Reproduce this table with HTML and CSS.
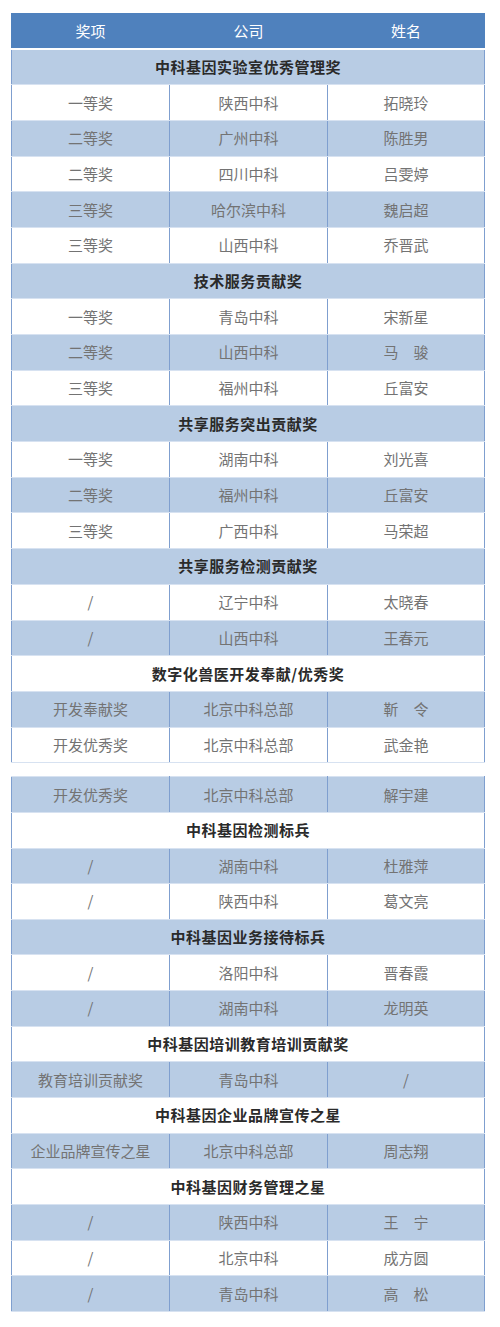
FILE: index.html
```html
<!DOCTYPE html>
<html lang="zh">
<head>
<meta charset="utf-8">
<link rel="stylesheet" href="styles.css">
</head>
<body>
<div class="page">
<table class="awards">
<colgroup><col class="c1"><col class="c2"><col class="c3"></colgroup>
<thead><tr class="head"><th>奖项</th><th>公司</th><th>姓名</th></tr></thead>
<tbody>
<tr class="sec blue"><td colspan="3">中科基因实验室优秀管理奖</td></tr>
<tr class="white"><td>一等奖</td><td>陕西中科</td><td>拓晓玲</td></tr>
<tr class="blue"><td>二等奖</td><td>广州中科</td><td>陈胜男</td></tr>
<tr class="white"><td>二等奖</td><td>四川中科</td><td>吕雯婷</td></tr>
<tr class="blue"><td>三等奖</td><td>哈尔滨中科</td><td>魏启超</td></tr>
<tr class="white"><td>三等奖</td><td>山西中科</td><td>乔晋武</td></tr>
<tr class="sec blue"><td colspan="3">技术服务贡献奖</td></tr>
<tr class="white"><td>一等奖</td><td>青岛中科</td><td>宋新星</td></tr>
<tr class="blue"><td>二等奖</td><td>山西中科</td><td>马&emsp;骏</td></tr>
<tr class="white"><td>三等奖</td><td>福州中科</td><td>丘富安</td></tr>
<tr class="sec blue"><td colspan="3">共享服务突出贡献奖</td></tr>
<tr class="white"><td>一等奖</td><td>湖南中科</td><td>刘光喜</td></tr>
<tr class="blue"><td>二等奖</td><td>福州中科</td><td>丘富安</td></tr>
<tr class="white"><td>三等奖</td><td>广西中科</td><td>马荣超</td></tr>
<tr class="sec blue"><td colspan="3">共享服务检测贡献奖</td></tr>
<tr class="white"><td>/</td><td>辽宁中科</td><td>太晓春</td></tr>
<tr class="blue"><td>/</td><td>山西中科</td><td>王春元</td></tr>
<tr class="sec white"><td colspan="3">数字化兽医开发奉献/优秀奖</td></tr>
<tr class="blue"><td>开发奉献奖</td><td>北京中科总部</td><td>靳&emsp;令</td></tr>
<tr class="white"><td>开发优秀奖</td><td>北京中科总部</td><td>武金艳</td></tr>
</tbody>
</table>

<table class="awards second">
<colgroup><col class="c1"><col class="c2"><col class="c3"></colgroup>
<tbody>
<tr class="blue"><td>开发优秀奖</td><td>北京中科总部</td><td>解宇建</td></tr>
<tr class="sec white"><td colspan="3">中科基因检测标兵</td></tr>
<tr class="blue"><td>/</td><td>湖南中科</td><td>杜雅萍</td></tr>
<tr class="white"><td>/</td><td>陕西中科</td><td>葛文亮</td></tr>
<tr class="sec blue"><td colspan="3">中科基因业务接待标兵</td></tr>
<tr class="white"><td>/</td><td>洛阳中科</td><td>晋春霞</td></tr>
<tr class="blue"><td>/</td><td>湖南中科</td><td>龙明英</td></tr>
<tr class="sec white"><td colspan="3">中科基因培训教育培训贡献奖</td></tr>
<tr class="blue"><td>教育培训贡献奖</td><td>青岛中科</td><td>/</td></tr>
<tr class="sec white"><td colspan="3">中科基因企业品牌宣传之星</td></tr>
<tr class="blue"><td>企业品牌宣传之星</td><td>北京中科总部</td><td>周志翔</td></tr>
<tr class="sec white"><td colspan="3">中科基因财务管理之星</td></tr>
<tr class="blue"><td>/</td><td>陕西中科</td><td>王&emsp;宁</td></tr>
<tr class="white"><td>/</td><td>北京中科</td><td>成方圆</td></tr>
<tr class="blue"><td>/</td><td>青岛中科</td><td>高&emsp;松</td></tr>
</tbody>
</table>
</div>
</body>
</html>
```
FILE: styles.css
```css
html, body {
  margin: 0;
  padding: 0;
  background: #ffffff;
}
.page {
  padding: 13px 16px 0 11px;
  display: flex;
  flex-direction: column;
  gap: 13px;
  font-family: "Noto Sans CJK SC", "Noto Sans", sans-serif;
}
.awards {
  width: 473px;
  border-collapse: collapse;
  table-layout: fixed;
  border: 1px solid #8fabd3;
}
.c1, .c2 { width: 158px; }
.c3 { width: 157px; }
.awards th, .awards td {
  text-align: center;
  vertical-align: middle;
  padding: 0;
  font-size: 15px;
  line-height: 20px;
  color: #737373;
  border-left: 1px solid #7f9fcf;
  border-right: 1px solid #7f9fcf;
  border-top: 1px solid #d7e2f1;
  border-bottom: 1px solid #d7e2f1;
}
.head th {
  height: 34px;
  background: #4f81bd;
  color: #ffffff;
  font-weight: normal;
  font-size: 15px;
  border-color: #4f81bd;
  border-bottom: 2px solid #ffffff;
}
.awards tbody tr { height: 35.7px; }
.second tbody tr { height: 35.65px; }
.blue td { background: #b8cce4; }
.white td { background: #ffffff; }
.sec td {
  font-weight: bold;
  color: #2a2a2a;
  letter-spacing: 0.5px;
}
```
